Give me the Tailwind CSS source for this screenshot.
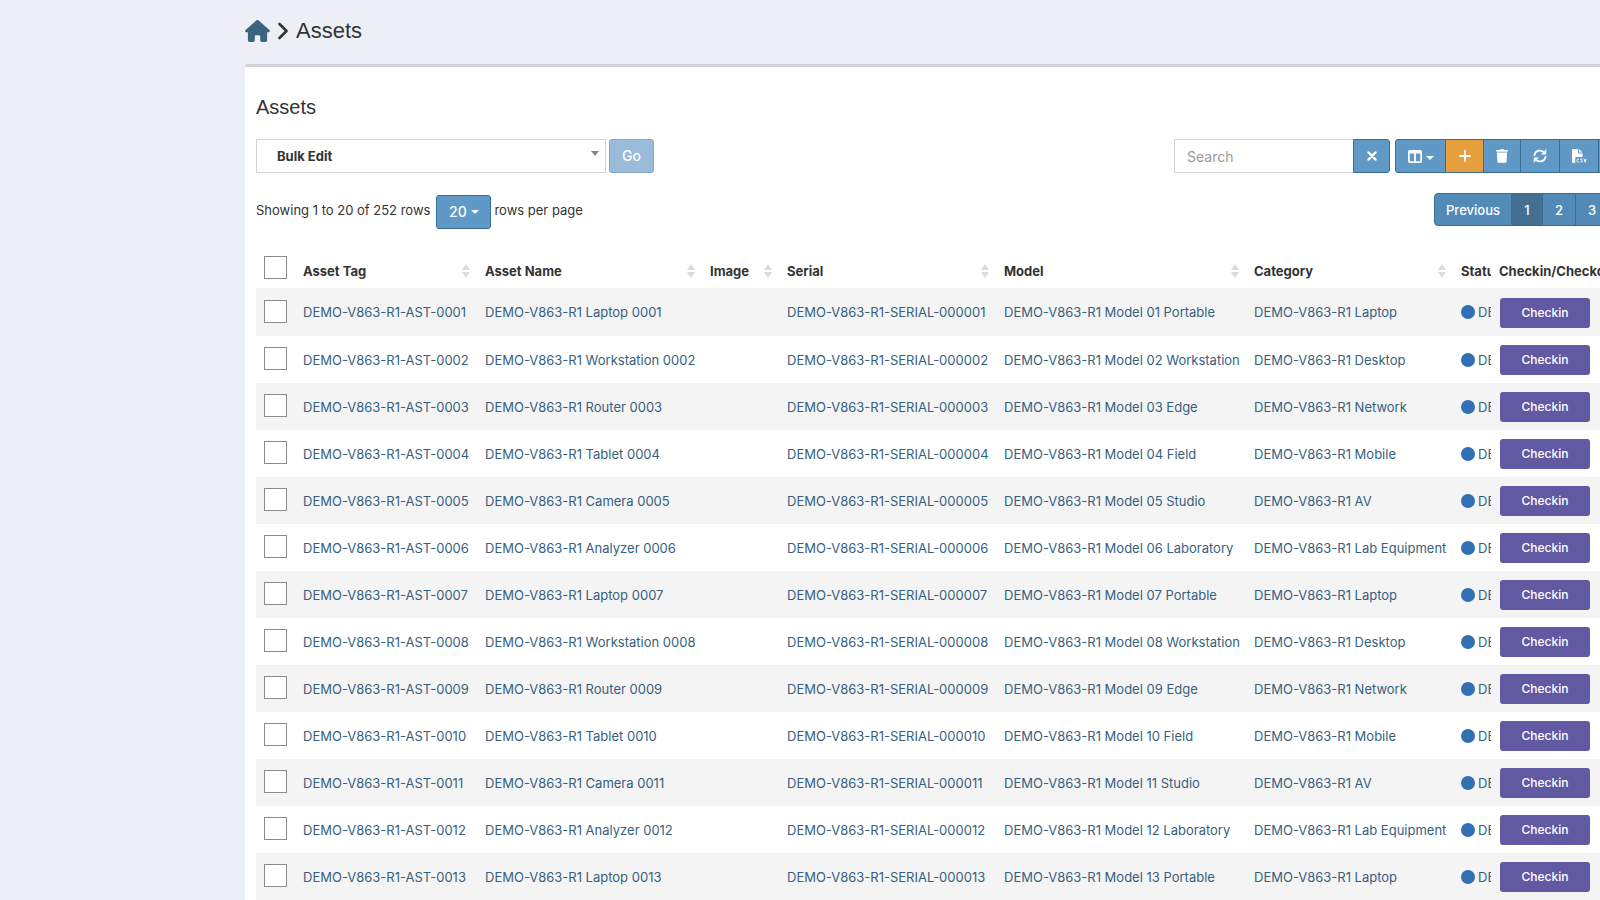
<!DOCTYPE html>
<html lang="en">
<head>
    <meta charset="UTF-8">
    <meta name="viewport" content="width=device-width, initial-scale=1.0">
    <title>Assets</title>
    <script src="https://cdn.jsdelivr.net/npm/@tailwindcss/browser@4"></script>
</head>
<body class="bg-[#ecf0f6] font-['Inter','Liberation_Sans',sans-serif] text-[13px] leading-5 text-[#333] overflow-x-hidden">

    <main class="pl-[245px]">
        <nav class="h-16 pb-0.5 flex items-center gap-2">
            <a href="#" aria-label="Home" class="text-[#3c6382]">
                <svg class="w-[25px] h-[22px]" viewBox="0 0 576 512" fill="currentColor"><path d="M575.800 255.500c0 18-15 32.100-32 32.100h-32l.7 160.200c0 2.700-.2 5.400-.5 8.100V472c0 22.100-17.900 40-40 40H392c-22.100 0-40-17.900-40-40v-88c0-17.700-14.300-32-32-32h-64c-17.700 0-32 14.300-32 32v88c0 22.100-17.900 40-40 40h-80c-22.100 0-40-17.900-40-40V287.600H32c-18 0-32-14-32-32.100 0-9 3-17 10-24L266.400 8c7-7 15-8 22-8s15 2 21 7l255.400 224.500c8 7 12 15 11 24z"/></svg>
            </a>
            <svg class="w-[10px] h-[18px]" viewBox="0 0 10 18" fill="none" stroke="#333" stroke-width="2.600" stroke-linecap="round" stroke-linejoin="round"><path d="M1.500 2 8.500 9 1.500 16"/></svg>
            <h1 class="font-['Liberation_Sans',sans-serif] text-[22px] leading-7">Assets</h1>
        </nav>

        <section class="w-[1554px] bg-white border-t-3 border-[#d2d3d8] rounded-t-[3px] px-[11px]">
            <h2 class="font-['Liberation_Sans',sans-serif] text-xl leading-6 pt-7 pb-5">Assets</h2>

            <!-- Toolbar -->
            <div class="flex justify-between">
                <form class="flex gap-[3px]">
                    <div class="relative">
                        <select aria-label="Bulk actions" class="appearance-none w-[350px] h-[34px] border border-[#d2d3d6] bg-white pl-5 font-bold">
                            <option>Bulk Edit</option>
                        </select>
                        <span class="absolute right-[7px] top-3 border-x-4 border-t-5 border-x-transparent border-t-[#888] pointer-events-none"></span>
                    </div>
                    <button type="button" class="w-[45px] h-[34px] rounded-[3px] border border-[#86a8c0] bg-[#9abbd9] text-white text-sm font-medium">Go</button>
                </form>
                <div class="w-[614px] flex">
                    <input type="text" aria-label="Search" placeholder="Search" class="w-[179px] h-[34px] border border-r-0 border-[#d2d3d6] px-3 text-sm placeholder:text-[#999]">
                    <button type="button" aria-label="Clear search" class="w-[37px] h-[34px] mr-[5px] flex items-center justify-center rounded-r-[3px] border border-[#386e95] bg-[#6098c6] text-white">
                        <svg class="size-[10px]" viewBox="0 0 10 10" stroke="currentColor" stroke-width="2.200" stroke-linecap="round"><path d="M1.400 1.400l7.200 7.200M8.600 1.400 1.400 8.600"/></svg>
                    </button>
                    <div class="flex text-white *:h-[34px] *:flex *:items-center *:justify-center *:border-y *:border-r *:border-[#386e95]">
                        <button type="button" aria-label="Columns" class="w-[51px] gap-1 border-l rounded-l-[3px] bg-[#6098c6]">
                            <svg class="w-[14px] h-[13px]" viewBox="0 0 14 13" fill="currentColor" fill-rule="evenodd"><path d="M2 0h10a2 2 0 0 1 2 2v9a2 2 0 0 1-2 2H2a2 2 0 0 1-2-2V2a2 2 0 0 1 2-2zM1.700 3.600v7.600h4.400V3.600zM7.900 3.600v7.600h4.400V3.600z"/></svg>
                            <span class="mt-1 border-x-4 border-t-4 border-x-transparent border-t-white"></span>
                        </button>
                        <button type="button" aria-label="Create new" class="w-[38px] bg-[#e5a03d]">
                            <svg class="size-3" viewBox="0 0 12 12" stroke="currentColor" stroke-width="1.800" stroke-linecap="round"><path d="M6 1v10M1 6h10"/></svg>
                        </button>
                        <button type="button" aria-label="Deleted" class="w-[37px] bg-[#6098c6]">
                            <svg class="w-3 h-[14px]" viewBox="0 0 448 512" fill="currentColor"><path d="M135 18 128 32H32C14 32 0 46 0 64s14 32 32 32h384c18 0 32-14 32-32s-14-32-32-32h-96l-7-14C307 7 296 0 284 0H164c-12 0-23 7-29 18zM416 128H32l21 339c2 25 23 45 48 45h246c25 0 46-20 48-45z"/></svg>
                        </button>
                        <button type="button" aria-label="Refresh" class="w-[39px] bg-[#6098c6]">
                            <svg class="size-[14px]" viewBox="0 0 14 14" fill="none" stroke="currentColor" stroke-width="1.800" stroke-linecap="round"><path d="M1.400 6.200A5.700 5.700 0 0 1 11.500 3.800M12.600 7.800A5.700 5.700 0 0 1 2.500 10.200"/><path d="M13 1v4.200H8.800zM1 13V8.800h4.200z" fill="currentColor" stroke-width=".6"/></svg>
                        </button>
                        <button type="button" aria-label="Export CSV" class="w-[39px] bg-[#6098c6]">
                            <svg class="w-[15px] h-[15px]" viewBox="0 0 15 15" fill="currentColor"><path d="M1.500 0H6v3.500c0 .6.400 1 1 1h3.500V8H4.500C3.700 8 3.200 8.600 3.200 9.400V14H1.500C.7 14 0 13.300 0 12.500v-11C0 .7.700 0 1.500 0zM7 0l3.500 3.500H7z"/><path d="M7 10.200c-.3-.5-2-.6-2 1.300s1.700 1.800 2 1.300M10.400 10c-.6-.4-1.800-.3-1.800.5 0 1 1.900.7 1.900 1.800 0 .9-1.300.9-2 .5M12 9.800l1.100 3.400 1.100-3.400" fill="none" stroke="currentColor" stroke-width="1"/></svg>
                        </button>
                        <button type="button" aria-label="Print" class="w-[39px] rounded-r-[3px] bg-[#6098c6]"></button>
                    </div>
                </div>
            </div>

            <!-- Paging -->
            <div class="flex justify-between pt-5">
                <div class="flex items-center pt-0.5">
                    <span class="pb-1">Showing 1 to 20 of 252 rows</span>
                    <button type="button" class="w-[55px] h-[34px] ml-1.5 mr-[3px] flex items-center justify-center gap-1 rounded-[3px] border border-[#386e95] bg-[#6098c6] text-white text-sm font-medium">20
                        <span class="border-x-4 border-t-4 border-x-transparent border-t-white"></span>
                    </button>
                    <span class="pb-1">rows per page</span>
                </div>
                <div class="w-[354px] h-[33px] flex text-white font-medium *:flex *:items-center *:justify-center *:border-y *:border-r *:border-[#386e95] *:bg-[#538bb8]">
                    <a href="#" class="w-[78px] border-l rounded-l-[4px]">Previous</a>
                    <a href="#" class="w-[31px] bg-[#426f92]!">1</a>
                    <a href="#" class="w-[33px]">2</a>
                    <a href="#" class="w-[33px]">3</a>
                    <a href="#" class="w-[33px]">4</a>
                    <a href="#" class="w-[33px]">5</a>
                </div>
            </div>

            <table class="table-fixed w-full mt-3 text-left whitespace-nowrap">
                <colgroup>
                    <col class="w-[39px]"><col class="w-[182px]"><col class="w-[225px]"><col class="w-[77px]"><col class="w-[217px]"><col class="w-[250px]"><col class="w-[207px]"><col class="w-[38px]"><col>
                </colgroup>
                <thead>
                    <tr id="heads" class="h-[47px]">
                        <th class="pl-2 pt-1.5"><input type="checkbox" aria-label="Select all" class="block appearance-none size-[23px] border border-[#8a8a8a] bg-white"></th>
                    </tr>
                </thead>
                <tbody id="rows" class="text-[#365f80]"></tbody>
            </table>
        </section>
    </main>

    <script>
        const heads = ["Asset Tag", "Asset Name", "Image", "Serial", "Model", "Category"];
        const kinds = [
            ["Laptop", "Portable", "Laptop"],
            ["Workstation", "Workstation", "Desktop"],
            ["Router", "Edge", "Network"],
            ["Tablet", "Field", "Mobile"],
            ["Camera", "Studio", "AV"],
            ["Analyzer", "Laboratory", "Lab Equipment"]
        ];
        const prefix = "DEMO-V863-R1";

        document.getElementById("heads").insertAdjacentHTML("beforeend", heads.map(h => `
            <th class="pl-2 pr-[7px] pt-3"><div class="flex items-center justify-between">${h}
                <svg class="w-2 h-[14px]" viewBox="0 0 8 14" fill="#dcdcdc"><path d="M4 0l4 6H0zM4 14l4-6H0z"/></svg>
            </div></th>`).join("") + `
            <th class="pl-2 pt-3 overflow-hidden">Status</th>
            <th class="pl-2 pt-3">Checkin/Checkout</th>`);

        let html = "";
        for (let i = 1; i <= 20; i++) {
            const [name, model, category] = kinds[(i - 1) % kinds.length];
            const n = String(i).padStart(2, "0");
            html += `
            <tr class="h-[47px] first:h-12 odd:bg-[#f4f4f4]">
                <td class="pl-2 pb-0.5"><input type="checkbox" aria-label="Select asset ${n}" class="block appearance-none size-[23px] border border-[#8a8a8a] bg-white"></td>
                <td class="pl-2"><a href="#">${prefix}-AST-00${n}</a></td>
                <td class="pl-2"><a href="#">${prefix} ${name} 00${n}</a></td>
                <td></td>
                <td class="pl-2"><a href="#">${prefix}-SERIAL-0000${n}</a></td>
                <td class="pl-2"><a href="#">${prefix} Model ${n} ${model}</a></td>
                <td class="pl-2"><a href="#">${prefix} ${category}</a></td>
                <td class="pl-2 overflow-hidden"><div class="flex items-center gap-[3px]"><span class="size-[14px] shrink-0 rounded-full bg-[#3170b3]"></span><a href="#">DEMO</a></div></td>
                <td class="pl-[9px] pt-px"><button type="button" class="block w-[90px] h-[30px] rounded-[3px] bg-[#6259a3] text-white text-xs font-medium">Checkin</button></td>
            </tr>`;
        }
        document.getElementById("rows").innerHTML = html;
    </script>
</body>
</html>
